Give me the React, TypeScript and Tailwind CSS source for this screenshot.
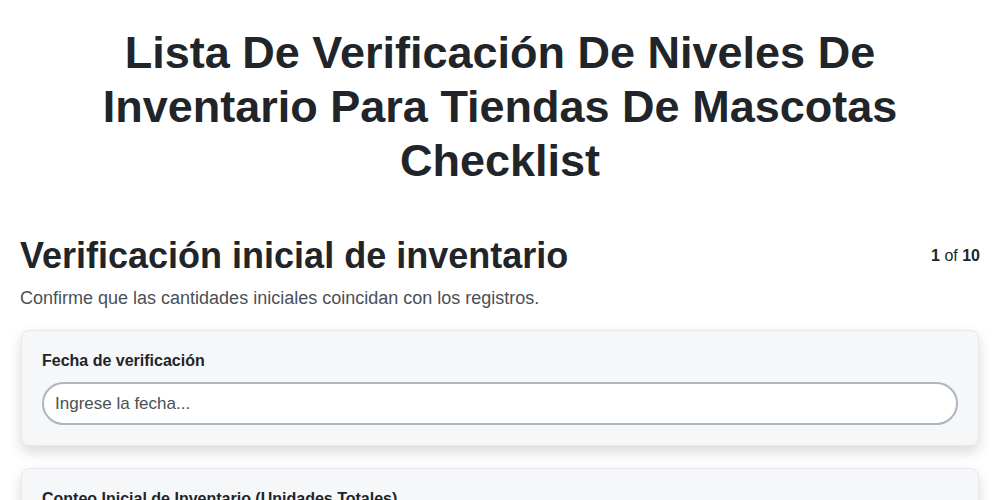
export default function App() {
  return (
    <div className="min-h-screen bg-white font-['Liberation_Sans',Arial,sans-serif] text-[#212529]">
      <h1 className="mx-auto max-w-[860px] pt-[26px] text-center text-[45px] font-bold leading-[54px]">
        Lista De Verificación De Niveles De Inventario Para Tiendas De Mascotas Checklist
      </h1>

      <div className="px-5 pt-[46px]">
        <div className="flex items-start justify-between">
          <h2 className="text-[36px] font-bold leading-[44px]">
            Verificación inicial de inventario
          </h2>
          <span className="pt-[10px] text-[16px]">
            <b>1</b> of <b>10</b>
          </span>
        </div>
        <p className="mt-[7px] text-[18px] text-[#495057]">
          Confirme que las cantidades iniciales coincidan con los registros.
        </p>

        <div className="mt-[18px] flex flex-col gap-[22px]">
          <div className="mx-px rounded-lg border border-[#e6e8ee] bg-[#f6f7f9] px-5 pb-5 pt-[20px] shadow-[0_6px_14px_rgba(0,0,0,0.15)]">
            <label className="block text-[16px] font-bold leading-[20px]">
              Fecha de verificación
            </label>
            <input
              className="mt-[11px] h-[43px] w-full rounded-full border-2 border-[#adb5bd] bg-white px-[11px] text-[17px] text-[#212529] outline-none placeholder:text-[#495057]"
              placeholder="Ingrese la fecha..."
            />
          </div>

          <div className="mx-px rounded-lg border border-[#e6e8ee] bg-[#f6f7f9] px-5 pb-5 pt-[20px] shadow-[0_6px_14px_rgba(0,0,0,0.15)]">
            <label className="block text-[16px] font-bold leading-[20px]">
              Conteo Inicial de Inventario (Unidades Totales)
            </label>
            <input
              className="mt-[11px] h-[43px] w-full rounded-full border-2 border-[#adb5bd] bg-white px-[11px] text-[17px] outline-none placeholder:text-[#495057]"
              placeholder="Ingrese el conteo..."
            />
          </div>
        </div>
      </div>
    </div>
  );
}
